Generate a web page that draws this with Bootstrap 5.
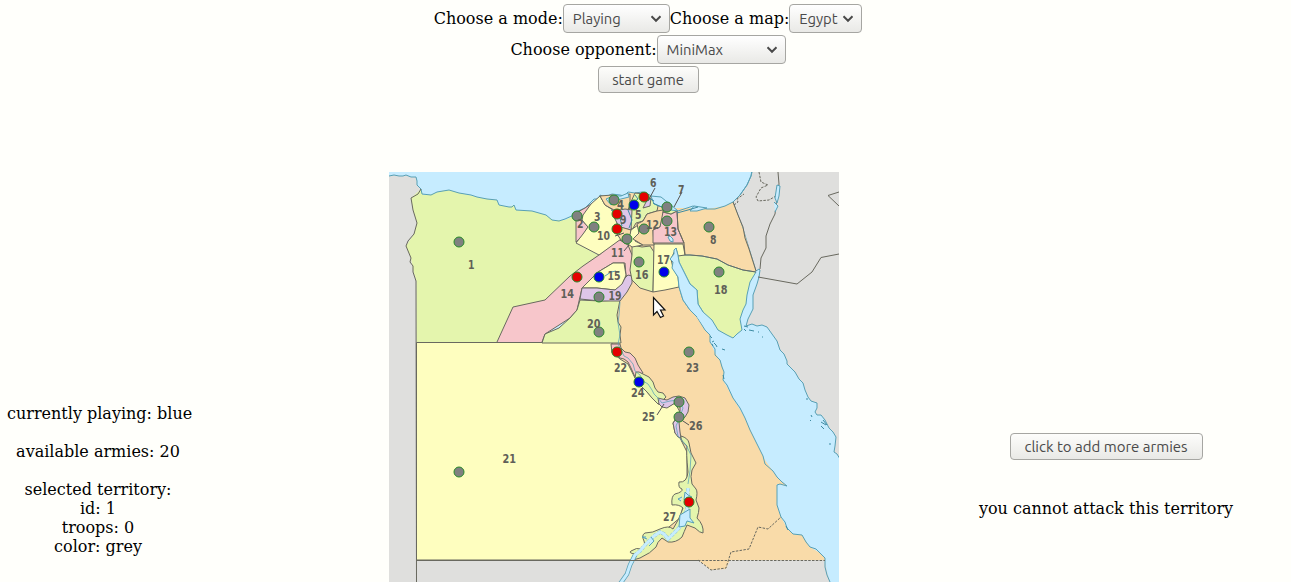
<!DOCTYPE html>
<html lang="en">
<head>
<meta charset="utf-8">
<title>Risk</title>
<link href="https://cdn.jsdelivr.net/npm/bootstrap@5.3.0/dist/css/bootstrap.min.css" rel="stylesheet">
<style>
body{background:#fffffb;color:#000;font:16px/19px "DejaVu Serif",serif;height:582px;overflow:hidden}
.controls{height:172px;padding:4px 0 0 5px}
.ctl-row{height:31px}
.ctl-row label{white-space:nowrap;padding-top:5px}
.form-select.game,.btn.game{font:14.8px/19px Ubuntu,"Noto Sans",sans-serif;color:#4a4a4a;border:1px solid #a6a6a2;border-radius:4px;background-color:#f3f3f0;white-space:nowrap}
.form-select.game{height:29px;padding:4px 22px 4px 9px;background-image:url("data:image/svg+xml,%3Csvg xmlns='http://www.w3.org/2000/svg' viewBox='0 0 12 8'%3E%3Cpath d='M1.5 1.3L6 5.8 10.500 1.300' fill='none' stroke='%234a4a4a' stroke-width='2'/%3E%3C/svg%3E"),linear-gradient(#fff,#e9e9e6);background-size:12px 8px,100% 100%;background-position:right 7px center,0 0;background-repeat:no-repeat}
.btn.game{height:27px;padding:3px 0;background-image:linear-gradient(#fdfdfb,#e9e9e6)}
.w-mode{width:107px}.w-map{width:73px}.w-opp{width:129px}.w-start{width:101px}.btn.w-add{width:193px;font-size:15px}
.board{height:410px;display:grid;grid-template-columns:389px 450px 452px}
.status{padding:232px 0 0 7px;width:189px}
.act{padding:261px 0 0 82px}
.act p{margin:39px 0 0}
.egypt{display:block;width:450px;height:410px}
.border-line{stroke:#69695f;stroke-width:1;stroke-linejoin:round}
.coast{stroke:#58a0b5;stroke-width:1;stroke-linejoin:round}
.isle{stroke:#3d8ba3}
.g{fill:#e4f5ad}.y{fill:#fefebf}.o{fill:#f9dba9}.p{fill:#f7c6cb}.v{fill:#dec6e8}.land{fill:#dfdfdd}.sea{fill:#c6ecff}
.nums text{font:bold 12.5px "DejaVu Sans Condensed","DejaVu Sans",sans-serif;fill:#605f58}
.troops circle{stroke:#26892a;stroke-width:1}
.n{fill:#808080}.r{fill:#e40000}.b{fill:#0000ec}
</style>
</head>
<body>
<header class="controls d-flex flex-column align-items-center">
<div class="ctl-row d-flex align-items-start"><label for="mode">Choose a mode:</label><select id="mode" class="form-select game w-mode"><option>Playing</option></select><label for="map">Choose a map:</label><select id="map" class="form-select game w-map"><option>Egypt</option></select></div>
<div class="ctl-row d-flex align-items-start"><label for="opp">Choose opponent:</label><select id="opp" class="form-select game w-opp"><option>MiniMax</option></select></div>
<button class="btn game w-start" type="button">start game</button>
</header>
<main class="board">
<section class="status text-center text-nowrap">
<div>currently playing: blue</div><br>
<div>available armies: 20</div><br>
<div>selected territory:</div><div>id: 1</div><div>troops: 0</div><div>color: grey</div>
</section>
<svg class="egypt" viewBox="0 0 450 410" fill="none">
<rect class="sea" width="450" height="410"/>
<!-- neighbouring countries -->
<path class="land" d="M0 4L5 3 13 4 17 3 22 5 27 5 28 9 28 13 32 17 32 388H309L436 388 438 399 441 410H0Z"/>
<path class="coast" d="M0 4L5 3 10 4 14 4 17 3 22 5 27 5 28 9 28 13 32 17"/>
<path class="land coast" d="M363 -2L362 4 358 13 351 23 344 30 355 60 367 99 370 97 371 98 370 105 368 112 364 123 364 137 359 147 357 154 363 152 368 154 373 153 378 155 383 162 388 169 391 178 395 182 398 189 398 192 406 200 410 207 414 211 416 218 419 225 422 229 428 231 428 236 426 240 428 243 432 243 436 248 440 256 444 260 447 265 446 274 445 280 448 282 451 287 452-2Z"/>
<!-- Eastern desert and the whole Red Sea shore -->
<path class="o" d="M211 23L216 25 223 22 231 24 239 21 253 21 261 23 271 29 284 36 298 36 318 37 336 34 344 30 355 60 367 99 308 116 286 83 283 88 284 96 289 105 290 115 294 128 301 138 308 145 316 158 321 163 321 170 326 181 331 188 335 200 334 208 344 226 356 246 366 268 371 278 376 288 388 305 398 314 388 312 388 333 392 345 398 356 404 362 413 363 421 375 431 381 436 386V388H341L337 397 322 398 309 388H223V23Z"/>
<path class="coast" d="M290 115L294 128 301 138 308 145 316 158 321 163 321 170 326 177 326 183 331 188 333 195 335 200 334 208 338 213 344 226 351 236 356 246 361 258 366 268 371 278 374 284 376 292 384 299 388 305 393 310 398 314 391 312 388 313 388 333 392 345 396 350 398 356 404 362 413 363 417 370 421 375 427 377 431 381 436 386 436 395 438 403 441 410"/>
<!-- 1 -->
<path class="g" d="M32 17L34 23 40 23 52 19 60 18 75 22 93 26 108 28 110 33 120 35 125 33 127 38 143 39 157 43 164 48 176 48 187 43V71L211 84 161 140 153 171H27.500V109L24 98 22 86 17 74 25 62 28 51 24 38 22 26Z"/>
<path class="coast" d="M32 17L33 22 42 23 48 20 60 18 70 21 82 23 88 25 98 27 108 28 110 33 120 35 123 35 125 33 127 38 143 39 150 41 157 43 163 48 170 49 176 47 185 43 187 40 196 36 201 31 205 27 210 27 211 23 216 25 223 22 231 23 235 24 239 20 246 21 253 20 261 23 267 28 272 29 276 33 284 36 289 39 298 36 304 34 311 36 318 37 326 37 336 34 344 30 351 23 358 13 362 4 363 0"/>
<!-- 18 -->
<path class="g coast" d="M289 83L301 83 313 84 328 87 339 93 354 98 367 100 361 110 358 123 357 132 354 138 351 147 353 158 348 162 344 166 338 163 329 158 323 148 314 140 309 132 308 118 301 112 294 98 290 90Z"/>
<path class="border-line" d="M296 83L301 83 313 84 328 87 339 93 354 98 367 100"/>
<!-- 21 -->
<path class="y border-line" d="M27.500 170.500H223V180L231 187 239 192 246 206 258 220 269 232 278 235 286 231 291 240 284 251 286 261 291 266 298 280V310L292 345 262 370 244 388H27.500Z"/>
<!-- 14, 15, 16, 17, 19, 20 -->
<path class="p border-line" d="M108 170L124 135 156 128 181 104 194 94 210 83 229 67 239 73 243 83V104H237L236 91H224L209 100 193 116 188 138 181 146 156 162 153 170"/>
<path class="y border-line" d="M193 116L209 100 224 91H235L237 103 233 113 226 118 208 116Z"/>
<path class="g border-line" d="M191 128L211 129 231 128 228 143 229 150 232 155 231 163 232 171H153L156 162 170 156 181 146 188 138Z"/>
<path class="v border-line" d="M193 116L208 116 226 118 233 112 236 106 239 103 243 104 243 111 238 120 231 129 211 129 191 127Z"/>
<path class="g border-line" d="M243 73L253 75 261 74 265 80 264 120 251 116 243 108 241 98 243 83Z"/>
<path class="y border-line" d="M265 72H294L296 83 289 84 287 76 282 87 284 96 289 105 290 115 276 118 264 120Z"/>
<!-- Gulf of Suez -->
<path class="sea" d="M288 83L290 90 294 98 301 112 308 118 309 132 314 140 316 156 308 145 301 138 294 128 290 115 289 105 284 96 284 90Z"/>
<path class="sea coast" d="M314 140L309 132 308 118 301 112 294 98 290 90 289 83 287 76 285 78 285 82 281 87 284 90 283 96 289 105 290 115 294 128 301 138 308 145"/>
<path class="coast" d="M216 104L222 100 227 99"/>
<!-- Nile delta: 2 to 13 -->
<path class="p border-line" d="M187 41L196 36 202 32 204 34 194 43 193 48 199 55 194 63 187 70Z"/>
<path class="y border-line" d="M202 32L211 24 216 33 224 38 228 50 228 62 232 67 210 83 187 71 194 62 199 55 193 48 194 43Z"/>
<path class="o border-line" d="M211 24L223 23 232 25 241 22 241 32 239 38 225 38 216 33Z"/>
<path class="g border-line" d="M241 32L246 21 256 22 263 28 269 34 268 39 258 42 254 49 247 51 243 58 239 49Z"/>
<path class="v border-line" d="M254 36L257 30 262 26 261 34Z"/>
<path class="v border-line" d="M226 39L236 37 243 38 242 58 230 55 226 47Z"/>
<path class="o border-line" d="M228 54L242 58 240 73 232 68 228 62Z"/>
<path class="y border-line" d="M242 58L249 53 250 61 246 69 254 73 243 75 239 72Z"/>
<path class="o border-line" d="M258 42L268 39 274 38 274 45 271 55 264 58 265 73 254 73 244 67 250 61 248 52 254 49Z"/>
<path class="p border-line" d="M274 40L282 42 288 39 289 57 295 71H264V58L271 55Z"/>
<path class="g border-line" d="M277 36L284 36 288 39 282 42 274 40Z"/>
<path class="border-line" d="M288 39L289 57 295 71 296 83"/>
<path class="sea coast" d="M217 27L224 24 232 24 239 21 240 25 228 28 222 33ZM262 24L272 25 282 33 289 39 282 38 273 35 265 32ZM279 65L281 64 284 67 284 70 281 69ZM301 39L305 34 318 36 308 39Z" stroke-width=".7"/>
<path class="coast isle" d="M246 23L249 27 245 30M264 31L270 34 276 36M288 41L299 38 309 35M222 38L230 42 233 54M239 38L243 48 240 56M258 25L265 29" stroke-width=".8"/>
<!-- Nile valley: 22, 24 to 27 -->
<path class="p border-line" d="M222 172L231 172 232 176 236 180 241 181 246 186 249 193 254 201 246 205 242 196 239 190 235 187 231 186 223 181Z"/>
<path class="g border-line" d="M247 200L250 200 254 202 260 205 264 210 266 216 269 220 274 221 277 225 274 228 269 232 263 226 258 220 251 213 246 206Z"/>
<path class="v border-line" d="M269 226L273 227 278 228 284 225 290 224 296 226 300 233 299 240 296 245 290 250 291 260 292 266 289 265 286 261 284 251 289 245 291 239 291 235 286 231 278 236 273 235 270 232Z"/>
<path class="g border-line" d="M292 264Q299 266 300 271T302 281L307 291 303 298Q301 304 303 312L307 317Q309 320 307 328L310 336Q310 340 308 346 315 353 314 361 311 361 306 356L298 353Q295 360 293 365 287 371 279 370L273 366Q268 370 267 375 262 381 251 386L244 388Q242 384 246 382 239 381 242 379 248 375 252 377 257 374 255 369 252 363 256 361 264 361 271 357 280 353 284 357 290 348 294 336 290 332 283 333 282 324 286 322 294 320 293 317 289 316 290 310 298 311 299 300 297 280 298 274Q292 270 292 266Z"/>
<path class="coast" d="M231 130L230 143 229 151 231 163 229 172 235 184 239 186 244 192 246 199 251 203 254 209 259 212 263 218 265 222 269 226 273 231 281 229 290 228 294 236 291 245 287 254 289 264 297 273 302 283 301 299 299 312" opacity=".75"/>
<path d="M231 412L238 402 241 393 246 383" stroke="#58a0b5" stroke-width="4.500"/>
<path d="M246 383L251 379 256 373 261 368 265 364 271 360 275 362 279 367 285 361 291 355 294 346 298 338 299 316" stroke="#79b7c6" stroke-width="3.500" stroke-dasharray="3 1.500"/>
<path d="M231 412L238 402 241 393 246 383 251 379 256 373 261 368 265 364 271 360 275 362 279 367 285 361 291 355 294 346 298 338 299 316" stroke="#c6ecff" stroke-width="3"/>
<path class="sea coast" d="M291 343L296 340 301 337 301 346 305 351 298 349 296 354 290 355ZM258 367L253 365 257 365M260 374L265 369 262 365M292 329L289 327 293 325M295 328L296 320 299 323 303 325" stroke-width=".7"/>
<!-- state borders -->
<path class="border-line" stroke-width="1.300" d="M32 17L29 22 22 26 24 38 28 51 25 62 19 69 17 74 22 86 21 90 24 94 24 100 27 109 27.500 410M344 30L349 43 354 55 356 66 360 77 367 99M27 388.500H309M389 0L390 12 388 25 386 42 381 52 377 64 377 76 372 86 371 97M369 105L408 112 423 100 432 85.500 450 82M450 20L439 23.500 450 34"/>
<path class="border-line" stroke-dasharray="2.500 1.300" d="M309 388.500H436M309 388L322 398 337 396 342 380 360 377 369 355 379 357 392 345M370 0L372 10 379 13 372 16 367 25 369 29 380 28 387 24M345 33L349 30 348 27 355 22"/>
<path class="sea coast" d="M388 13L391 14 390 24 388 31 386 26ZM385 30L389 34 386 40" stroke-width=".8"/>
<path class="coast isle" d="M321 164l2 2m0 4l2-1m2 4l1 2m5 2l3 1m-11-7l2 2m-4-1l1 2m31-17l2 2m3-1l5 1m-10-5l4 1m10 5h1m3 5h1M417 227h2M422 243l1 2m-2 3l1 1m10 5l3 3m-1-9l4 5m-6-3l5 3m3 19h2M334 203l1 4M397 354l2 4" stroke-width="1.700"/>
<path d="M266 16L259 29M293 20L285 35M226 64L235 61M235 79L240 73M268 243L275 232M291 247L300 253" stroke="#555"/>
<g class="troops">
<circle class="n" cx="70" cy="70" r="5"/><circle class="n" cx="188" cy="44" r="5"/><circle class="n" cx="205" cy="55" r="5"/><circle class="n" cx="225" cy="28" r="5"/><circle class="r" cx="228" cy="42" r="5"/><circle class="r" cx="228" cy="57" r="5"/><circle class="b" cx="245" cy="33" r="5"/><circle class="r" cx="255" cy="25" r="5"/><circle class="n" cx="278" cy="35" r="5"/><circle class="n" cx="278" cy="49" r="5"/><circle class="n" cx="255" cy="57" r="5"/><circle class="n" cx="238" cy="67" r="5"/><circle class="n" cx="320" cy="55" r="5"/><circle class="n" cx="330" cy="100" r="5"/><circle class="n" cx="250" cy="90" r="5"/><circle class="b" cx="275" cy="100" r="5"/><circle class="r" cx="188" cy="105" r="5"/><circle class="b" cx="210" cy="105" r="5"/><circle class="n" cx="210" cy="125" r="5"/><circle class="n" cx="210" cy="160" r="5"/><circle class="r" cx="228" cy="180" r="5"/><circle class="n" cx="300" cy="180" r="5"/><circle class="b" cx="250" cy="210" r="5"/><circle class="n" cx="290" cy="230" r="5"/><circle class="n" cx="290" cy="245" r="5"/><circle class="n" cx="70" cy="300" r="5"/><circle class="r" cx="300" cy="330" r="5"/>
</g>
<g class="nums">
<text x="79" y="97" textLength="6.500" lengthAdjust="spacingAndGlyphs">1</text><text x="188" y="56" textLength="6.500" lengthAdjust="spacingAndGlyphs">2</text><text x="205" y="49" textLength="6.500" lengthAdjust="spacingAndGlyphs">3</text><text x="228" y="37" textLength="7" lengthAdjust="spacingAndGlyphs">4</text><text x="246" y="47" textLength="6.500" lengthAdjust="spacingAndGlyphs">5</text><text x="261" y="15" textLength="6.500" lengthAdjust="spacingAndGlyphs">6</text><text x="289" y="22" textLength="6.500" lengthAdjust="spacingAndGlyphs">7</text><text x="321" y="72" textLength="6.500" lengthAdjust="spacingAndGlyphs">8</text><text x="231" y="52" textLength="6.500" lengthAdjust="spacingAndGlyphs">9</text><text x="208" y="68" textLength="13" lengthAdjust="spacingAndGlyphs">10</text><text x="222" y="85" textLength="13" lengthAdjust="spacingAndGlyphs">11</text><text x="257" y="57" textLength="13" lengthAdjust="spacingAndGlyphs">12</text><text x="275" y="64" textLength="13" lengthAdjust="spacingAndGlyphs">13</text><text x="171.500" y="126" textLength="13.500" lengthAdjust="spacingAndGlyphs">14</text><text x="218.500" y="108" textLength="13" lengthAdjust="spacingAndGlyphs">15</text><text x="246" y="107" textLength="13.500" lengthAdjust="spacingAndGlyphs">16</text><text x="268" y="92" textLength="13" lengthAdjust="spacingAndGlyphs">17</text><text x="325" y="122" textLength="13.500" lengthAdjust="spacingAndGlyphs">18</text><text x="219.500" y="128" textLength="13" lengthAdjust="spacingAndGlyphs">19</text><text x="198" y="156" textLength="13.500" lengthAdjust="spacingAndGlyphs">20</text><text x="113.500" y="291" textLength="13.500" lengthAdjust="spacingAndGlyphs">21</text><text x="225" y="200" textLength="13" lengthAdjust="spacingAndGlyphs">22</text><text x="297" y="200" textLength="13" lengthAdjust="spacingAndGlyphs">23</text><text x="242" y="225" textLength="13.500" lengthAdjust="spacingAndGlyphs">24</text><text x="253" y="249" textLength="13" lengthAdjust="spacingAndGlyphs">25</text><text x="300" y="258" textLength="13.500" lengthAdjust="spacingAndGlyphs">26</text><text x="274" y="349" textLength="13" lengthAdjust="spacingAndGlyphs">27</text>
</g>
<path d="M264.500 125.500V143L268 139.500 271.500 145.500 274.500 144 271.500 138H276Z" fill="#fff" stroke="#111" stroke-width="1.200"/>
</svg>
<section class="act d-flex flex-column align-items-center text-nowrap">
<button class="btn game w-add" type="button">click to add more armies</button>
<p>you cannot attack this territory</p>
</section>
</main>
<script src="https://cdn.jsdelivr.net/npm/bootstrap@5.3.0/dist/js/bootstrap.bundle.min.js"></script>
</body>
</html>
